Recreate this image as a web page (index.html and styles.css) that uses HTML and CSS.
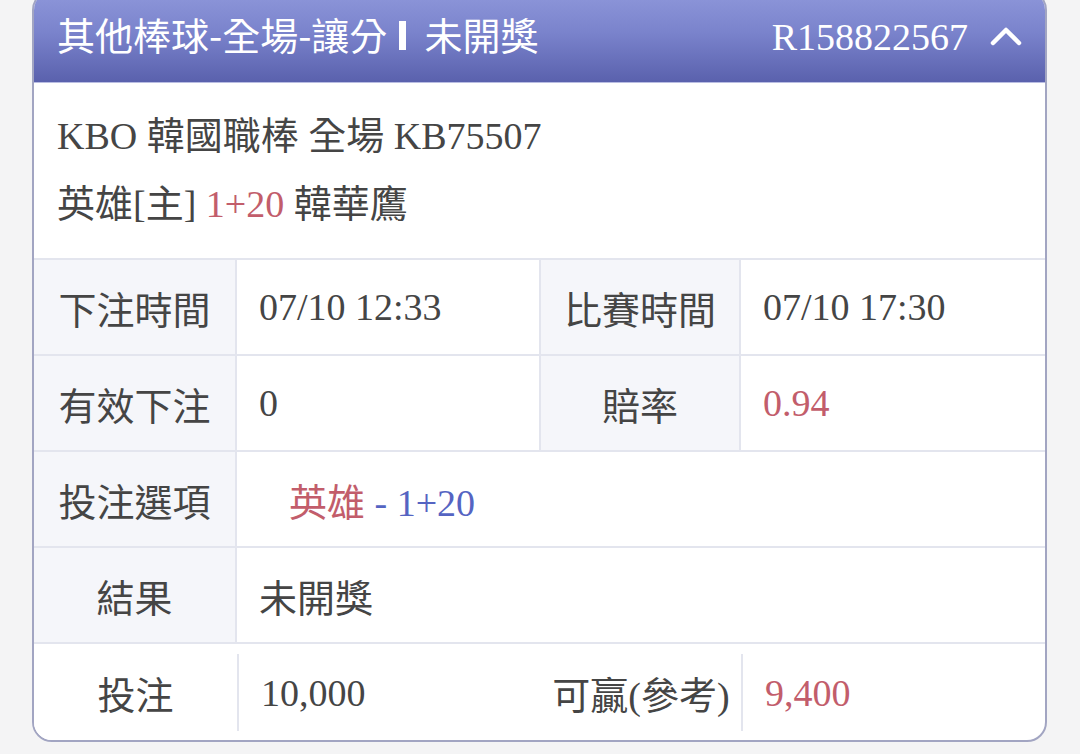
FILE: index.html
```html
<!DOCTYPE html>
<html lang="zh-Hant">
<head>
<meta charset="utf-8">
<link rel="stylesheet" href="styles.css">
</head>
<body>
<div class="card">
  <div class="head">
    <div class="title"><span>其他棒球-全場-讓分</span><span class="bar"></span><span>未開獎</span></div>
    <div class="right">
      <span class="id">R158822567</span>
      <svg class="chev" width="32" height="20" viewBox="0 0 32 20"><polyline points="3,17 16,4 29,17" fill="none" stroke="#fff" stroke-width="4.5" stroke-linecap="round" stroke-linejoin="round"/></svg>
    </div>
  </div>
  <div class="info">
    <div class="line">KBO 韓國職棒 全場 KB75507</div>
    <div class="line">英雄[主] <span class="red">1+20</span> 韓華鷹</div>
  </div>
  <div class="grid">
    <div class="lab">下注時間</div>
    <div class="val">07/10 12:33</div>
    <div class="lab">比賽時間</div>
    <div class="val last">07/10 17:30</div>

    <div class="lab">有效下注</div>
    <div class="val">0</div>
    <div class="lab">賠率</div>
    <div class="val last red">0.94</div>

    <div class="lab">投注選項</div>
    <div class="val wide"><span class="pick"><span class="red">英雄</span><span class="blue"> - 1+20</span></span></div>

    <div class="lab">結果</div>
    <div class="val wide">未開獎</div>

    <div class="lab plain">投注</div>
    <div class="val sep"><span class="sepin">10,000</span></div>
    <div class="lab plain">可贏(參考)</div>
    <div class="val sep last"><span class="sepin red">9,400</span></div>
  </div>
</div>
</body>
</html>
```

FILE: styles.css
```css
html, body {
  margin: 0;
  padding: 0;
  background: #f4f4f5;
}
body {
  padding: 0 33px 0 32px;
  font-family: "Liberation Serif", "Noto Sans CJK TC", serif;
  font-size: 38px;
  color: #454545;
  overflow: hidden;
}
.card {
  margin-top: -10px;
  background: #fff;
  border: 2px solid #a2a5c2;
  border-radius: 20px;
  overflow: hidden;
}
.head {
  height: 91px;
  border-bottom: 1px solid #b9bde2;
  background: linear-gradient(to bottom, #8e97da 0%, #7a83cc 45%, #5a61ad 100%);
  display: flex;
  align-items: center;
  justify-content: space-between;
  padding: 0 23px 0 23px;
  box-sizing: border-box;
  color: #fff;
}
.title {
  display: flex;
  align-items: center;
  white-space: nowrap;
  font-family: "Noto Sans CJK TC", "Liberation Sans", sans-serif;
  font-size: 38px;
  margin-top: -8px;
}
.bar {
  display: inline-block;
  width: 7px;
  height: 29px;
  background: #fff;
  margin: 4px 18px 0 12px;
}
.right {
  display: flex;
  align-items: center;
  gap: 22px;
}
.id {
  font-size: 38px;
  margin-top: 0;
}
.chev {
  display: block;
  margin-top: -2px;
}
.info {
  padding: 19px 23px 20px;
}
.line {
  height: 68px;
  line-height: 68px;
  white-space: nowrap;
}
.red { color: #c25d6b; }
.blue { color: #5564c2; }
.grid {
  display: grid;
  grid-template-columns: 203px 304px 200px 1fr;
  grid-auto-rows: 96px;
  border-top: 2px solid #e3e5ee;
}
.lab, .val {
  display: flex;
  align-items: center;
  border-bottom: 2px solid #e3e5ee;
  border-right: 2px solid #e3e5ee;
  white-space: nowrap;
}
.lab {
  justify-content: center;
  background: #f5f6fa;
}
.val {
  padding-left: 22px;
}
.val.last { border-right: none; }
.val.wide {
  grid-column: span 3;
  border-right: none;
}
.pick { margin-left: 30px; }
.lab.plain {
  background: #fff;
  border-right: none;
  border-bottom: none;
}
.val.sep {
  border-bottom: none;
  border-right: none;
  padding: 10px 0 9px 0;
  align-items: stretch;
}
.sepin {
  display: flex;
  align-items: center;
  flex: 1;
  padding-left: 22px;
  border-left: 2px solid #e3e5ee;
}
```
